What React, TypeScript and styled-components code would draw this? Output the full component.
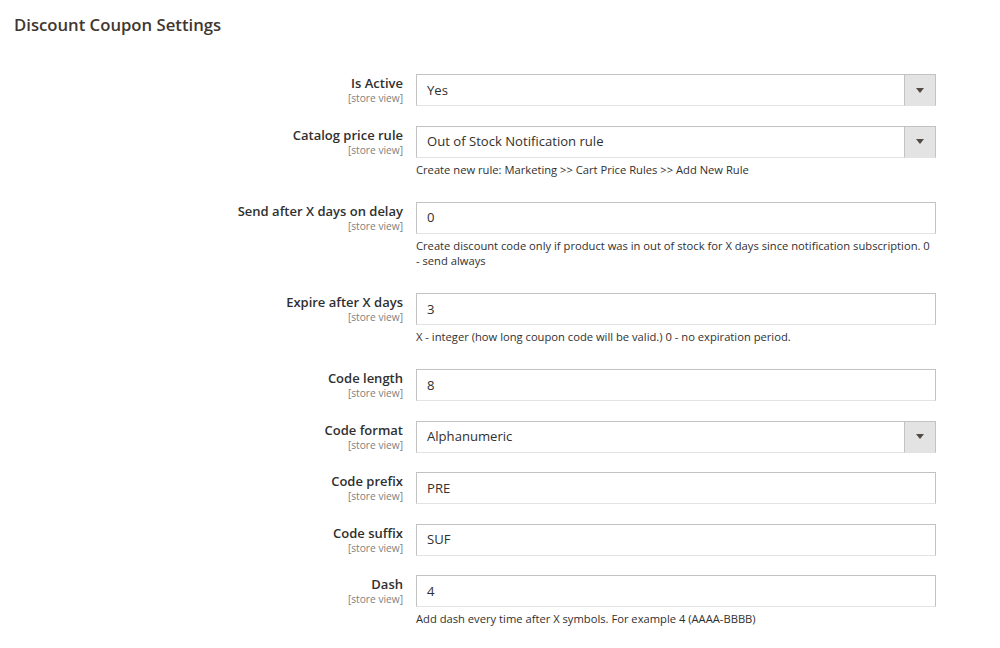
import React from 'react';
import styled, { createGlobalStyle } from 'styled-components';

const GlobalStyle = createGlobalStyle`
    body {
        margin: 0;
        background: #fff;
        font-family: 'Open Sans', 'Liberation Sans', sans-serif;
        color: #303030;
    }
`;

const Page = styled.div`
    padding: 14px 0 0 14px;
    width: 1000px;
    box-sizing: border-box;
`;

const Title = styled.h2`
    margin: 0 0 38px;
    font-size: 16.7px;
    line-height: 22px;
    font-weight: 600;
    color: #41362f;
`;

const Form = styled.div`
    display: flex;
    flex-direction: column;
    gap: 19.5px;
`;

const Row = styled.div`
    display: grid;
    grid-template-columns: 389px 520px;
    column-gap: 13px;
`;

const LabelCol = styled.div`
    text-align: right;
    padding-top: 1px;
`;

const LabelText = styled.div`
    font-size: 13px;
    line-height: 17px;
    font-weight: 600;
    color: #303030;
`;

const Scope = styled.div`
    font-size: 10.2px;
    line-height: 12px;
    color: #808080;
`;

const Field = styled.div`
    display: flex;
    flex-direction: column;
`;

const Control = styled.div`
    position: relative;
    height: 32px;
    box-sizing: border-box;
    border: 1px solid #c2c2c2;
    border-bottom-color: #e3e3e3;
    background: #fff;
    display: flex;
    align-items: center;
    padding: 0 0 1px 10px;
    font-size: 13.1px;
    color: #303030;
`;

const Arrow = styled.div`
    position: absolute;
    top: -1px;
    right: -1px;
    bottom: -1px;
    width: 32px;
    background: #e3e3e3;
    border: 1px solid #c2c2c2;
    border-bottom-color: #e3e3e3;
    box-sizing: border-box;
    display: flex;
    align-items: center;
    justify-content: center;

    &::after {
        content: '';
        border-left: 4px solid transparent;
        border-right: 4px solid transparent;
        border-top: 5px solid #514943;
    }
`;

const Note = styled.div`
    margin: 4px 0 5px;
    font-size: 11.2px;
    line-height: 15.5px;
    color: #303030;
`;

type FieldDef = {
    label: string;
    value: string;
    select?: boolean;
    note?: string;
};

const fields: FieldDef[] = [
    { label: 'Is Active', value: 'Yes', select: true },
    {
        label: 'Catalog price rule',
        value: 'Out of Stock Notification rule',
        select: true,
        note: 'Create new rule: Marketing >> Cart Price Rules >> Add New Rule',
    },
    {
        label: 'Send after X days on delay',
        value: '0',
        note: 'Create discount code only if product was in out of stock for X days since notification subscription. 0 - send always',
    },
    {
        label: 'Expire after X days',
        value: '3',
        note: 'X - integer (how long coupon code will be valid.) 0 - no expiration period.',
    },
    { label: 'Code length', value: '8' },
    { label: 'Code format', value: 'Alphanumeric', select: true },
    { label: 'Code prefix', value: 'PRE' },
    { label: 'Code suffix', value: 'SUF' },
    {
        label: 'Dash',
        value: '4',
        note: 'Add dash every time after X symbols. For example 4 (AAAA-BBBB)',
    },
];

const App: React.FC = () => (
    <Page>
        <GlobalStyle />
        <Title>Discount Coupon Settings</Title>
        <Form>
            {fields.map((f) => (
                <Row key={f.label}>
                    <LabelCol>
                        <LabelText>{f.label}</LabelText>
                        <Scope>[store view]</Scope>
                    </LabelCol>
                    <Field>
                        <Control>
                            {f.value}
                            {f.select && <Arrow />}
                        </Control>
                        {f.note && <Note>{f.note}</Note>}
                    </Field>
                </Row>
            ))}
        </Form>
    </Page>
);

export default App;
